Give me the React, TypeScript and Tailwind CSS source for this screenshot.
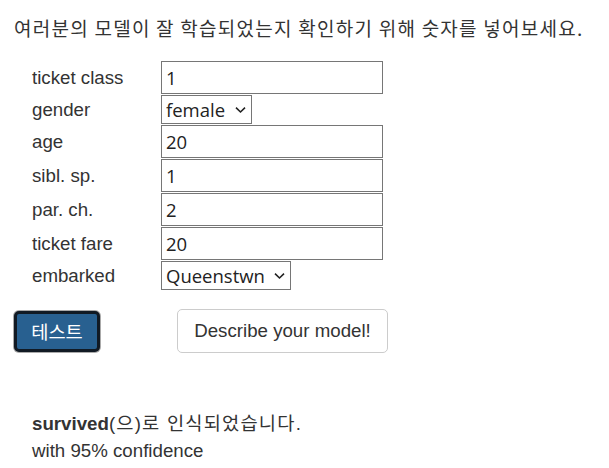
import React, { useState } from "react";

const labelFont = { fontFamily: '"Liberation Sans", Arial, "Noto Sans CJK KR", sans-serif' };

const fields = [
  { label: "ticket class", kind: "input", value: "1" },
  { label: "gender", kind: "select", value: "female", options: ["female", "male"], width: "w-[91px]" },
  { label: "age", kind: "input", value: "20" },
  { label: "sibl. sp.", kind: "input", value: "1" },
  { label: "par. ch.", kind: "input", value: "2" },
  { label: "ticket fare", kind: "input", value: "20" },
  {
    label: "embarked",
    kind: "select",
    value: "Queenstwn",
    options: ["Cherbourg", "Queenstwn", "Southampton"],
    width: "w-[130px]",
  },
];

const Chevron: React.FC = () => (
  <svg width="11" height="7" viewBox="0 0 11 7" className="pointer-events-none absolute right-[6px] top-1/2 -translate-y-1/2">
    <path d="M1 1.2 L5.5 5.5 L10 1.2" fill="none" stroke="#222" strokeWidth="1.6" />
  </svg>
);

const App: React.FC = () => {
  const [values, setValues] = useState<string[]>(fields.map((f) => f.value));

  const handleChange = (i: number, v: string) => {
    setValues((prev) => prev.map((p, j) => (j === i ? v : p)));
  };

  return (
    <div className="min-h-[468px] w-[609px] bg-white px-[14px] pt-[14px] text-[#333]" style={labelFont}>
      <p
        className="whitespace-nowrap text-[19px] leading-[27px] tracking-[1.25px] text-[#333]"
        style={{ fontFamily: '"Noto Sans CJK KR", sans-serif' }}
      >
        여러분의 모델이 잘 학습되었는지 확인하기 위해 숫자를 넣어보세요.
      </p>

      <div className="ml-[18px] mt-[20px] flex flex-col gap-[1px]">
        {fields.map((f, i) => (
          <div key={f.label} className="flex items-center">
            <span className="w-[129px] text-[18.7px] leading-[22px]">{f.label}</span>
            {f.kind === "input" ? (
              <input
                type="text"
                value={values[i]}
                onChange={(e) => handleChange(i, e.target.value)}
                className="h-[33px] w-[222px] border border-[#767676] bg-white px-[4px] text-[18.5px] text-[#222] outline-none"
                style={{ fontFamily: '"Open Sans", sans-serif' }}
              />
            ) : (
              <div className={`relative h-[29px] ${f.width}`}>
                <select
                  value={values[i]}
                  onChange={(e) => handleChange(i, e.target.value)}
                  className="h-full w-full appearance-none rounded-none border border-[#767676] bg-white pl-[4px] text-[18.5px] leading-[27px] text-[#222] outline-none"
                  style={{ fontFamily: '"Open Sans", sans-serif' }}
                >
                  {f.options!.map((o) => (
                    <option key={o}>{o}</option>
                  ))}
                </select>
                <Chevron />
              </div>
            )}
          </div>
        ))}
      </div>

      <div className="mt-[19px] flex items-center">
        <button
          className="h-[41px] w-[86px] rounded-[5px] border-[3px] border-[#111a24] bg-[#286090] text-[18.7px] text-white shadow-[0_0_0_1px_#aaa]"
          style={{ fontFamily: '"Noto Sans CJK KR", sans-serif' }}
        >
          테스트
        </button>
        <button className="ml-[77px] h-[44px] w-[211px] rounded-[5px] border border-[#ccc] bg-white text-[18.7px] text-[#333]">
          Describe your model!
        </button>
      </div>

      <div className="ml-[18px] mt-[57px] text-[18.7px] leading-[27px]">
        <p>
          <b>survived</b>
          <span
            className="tracking-[1.2px]"
            style={{ fontFamily: '"Liberation Sans", "Noto Sans CJK KR", sans-serif' }}
          >
            (으)로 인식되었습니다.
          </span>
        </p>
        <p>with 95% confidence</p>
      </div>
    </div>
  );
};

export default App;
